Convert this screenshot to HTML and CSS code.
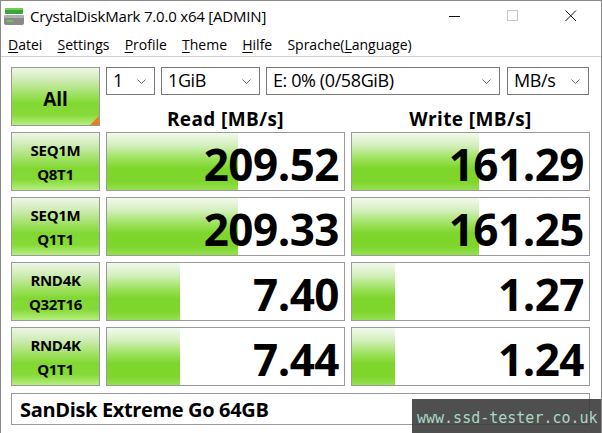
FILE: index.html
```html
<!DOCTYPE html>
<html lang="de">
<head>
<meta charset="utf-8">
<title>CrystalDiskMark 7.0.0 x64 [ADMIN]</title>
<link rel="stylesheet" href="styles.css">
</head>
<body>
<div class="window">
  <div class="titlebar">
    <svg class="app-icon" width="20" height="18" viewBox="0 0 20 18">
      <rect x="1" y="0" width="18" height="6" fill="#3aa83a"/>
      <rect x="1" y="0" width="18" height="2" fill="#6ccf5a"/>
      <rect x="0" y="7" width="20" height="10" rx="2" fill="#8a8a8a"/>
      <rect x="0" y="7" width="20" height="3" rx="1" fill="#b0b0b0"/>
      <rect x="3" y="12" width="6" height="2" fill="#5fd04a"/>
    </svg>
    <span class="title">CrystalDiskMark 7.0.0 x64 [ADMIN]</span>
    <div class="controls">
      <svg class="ctl" width="12" height="12" viewBox="0 0 12 12"><line x1="0" y1="6.5" x2="11" y2="6.5" stroke="#111" stroke-width="1"/></svg>
      <svg class="ctl" width="12" height="12" viewBox="0 0 12 12"><rect x="0.5" y="0.5" width="10" height="10" fill="none" stroke="#c8c8c8" stroke-width="1"/></svg>
      <svg class="ctl" width="12" height="12" viewBox="0 0 12 12"><path d="M0.5 0.5 L11 11 M11 0.5 L0.5 11" stroke="#111" stroke-width="1"/></svg>
    </div>
  </div>
  <div class="menubar">
    <span class="menu"><u>D</u>atei</span>
    <span class="menu"><u>S</u>ettings</span>
    <span class="menu"><u>P</u>rofile</span>
    <span class="menu"><u>T</u>heme</span>
    <span class="menu"><u>H</u>ilfe</span>
    <span class="menu">Sprache(<u>L</u>anguage)</span>
  </div>
  <div class="content">
    <div class="grid">
      <div class="all">All<span class="corner"></span></div>
      <div class="top-right">
        <div class="selects">
          <div class="select s-count"><span>1</span><svg class="chev" width="9" height="5" viewBox="0 0 9 5"><path d="M0.5 0.5 L4.5 4.5 L8.5 0.5" fill="none" stroke="#666" stroke-width="1"/></svg></div>
          <div class="select s-size"><span>1GiB</span><svg class="chev" width="9" height="5" viewBox="0 0 9 5"><path d="M0.5 0.5 L4.5 4.5 L8.5 0.5" fill="none" stroke="#666" stroke-width="1"/></svg></div>
          <div class="select s-drive"><span>E: 0% (0/58GiB)</span><svg class="chev" width="9" height="5" viewBox="0 0 9 5"><path d="M0.5 0.5 L4.5 4.5 L8.5 0.5" fill="none" stroke="#666" stroke-width="1"/></svg></div>
          <div class="select s-unit"><span>MB/s</span><svg class="chev" width="9" height="5" viewBox="0 0 9 5"><path d="M0.5 0.5 L4.5 4.5 L8.5 0.5" fill="none" stroke="#666" stroke-width="1"/></svg></div>
        </div>
        <div class="headers">
          <div class="head">Read [MB/s]</div>
          <div class="head">Write [MB/s]</div>
        </div>
      </div>

      <div class="label"><span>SEQ1M</span><span>Q8T1</span></div>
      <div class="value"><div class="bar" style="width:55.3%"></div><span class="num">209.52</span></div>
      <div class="value"><div class="bar" style="width:53.6%"></div><span class="num">161.29</span></div>

      <div class="label"><span>SEQ1M</span><span>Q1T1</span></div>
      <div class="value"><div class="bar" style="width:55.3%"></div><span class="num">209.33</span></div>
      <div class="value"><div class="bar" style="width:53.6%"></div><span class="num">161.25</span></div>

      <div class="label"><span>RND4K</span><span>Q32T16</span></div>
      <div class="value"><div class="bar" style="width:30.8%"></div><span class="num">7.40</span></div>
      <div class="value"><div class="bar" style="width:18.1%"></div><span class="num">1.27</span></div>

      <div class="label"><span>RND4K</span><span>Q1T1</span></div>
      <div class="value"><div class="bar" style="width:30.8%"></div><span class="num">7.44</span></div>
      <div class="value"><div class="bar" style="width:18.1%"></div><span class="num">1.24</span></div>
    </div>
    <div class="footer">SanDisk Extreme Go 64GB</div>
  </div>
  <div class="watermark">www.ssd-tester.co.uk</div>
</div>
</body>
</html>
```
FILE: styles.css
```css
* { box-sizing: border-box; }
html, body { margin: 0; padding: 0; background: #fff; }
body { font-family: "Open Sans", "Noto Sans", sans-serif; color: #000; }

.window {
  position: relative;
  width: 602px;
  height: 433px;
  border: 1px solid #8a8a8a;
  border-bottom: none;
  background: #fff;
  overflow: hidden;
}

.titlebar {
  height: 30px;
  display: flex;
  align-items: center;
  padding-left: 3px;
}
.app-icon { margin-top: 1px; }
.title {
  margin-left: 6px;
  font-size: 15px;
  color: #000;
  letter-spacing: -0.2px;
}
.controls {
  margin-left: auto;
  display: flex;
  align-items: center;
  gap: 46px;
  padding-right: 24px;
}
.ctl { display: block; }

.menubar {
  height: 26px;
  display: flex;
  align-items: center;
  padding-left: 7px;
  padding-top: 1px;
  font-size: 14px;
  border-bottom: 1px solid #d0d0d0;
}
.menu { margin-right: 15.2px; }
.menu u { text-decoration-thickness: 1px; text-underline-offset: 2px; }

.content {
  padding: 10px 10px 0 10px;
}

.grid {
  display: grid;
  grid-template-columns: 89px 239px 239px;
  grid-auto-rows: 59px;
  column-gap: 6px;
  row-gap: 6px;
}

.all, .label {
  border: 1px solid #9a9a9a;
  background: linear-gradient(to bottom, #eef7e6 0%, #cdebb2 22%, #9be05c 48%, #82d832 62%, #86da38 82%, #b6ee80 100%);
  display: flex;
  font-weight: 700;
}
.all {
  position: relative;
  align-items: center;
  justify-content: center;
  font-size: 19px;
  padding-top: 4px;
}
.corner {
  position: absolute;
  right: 0;
  bottom: 0;
  width: 0;
  height: 0;
  border-style: solid;
  border-width: 0 0 9px 9px;
  border-color: transparent transparent #f07a20 transparent;
}

.top-right {
  grid-column: span 2;
  display: flex;
  flex-direction: column;
}
.selects {
  display: flex;
  height: 30px;
}
.select {
  border: 1px solid #7a7a7a;
  display: flex;
  align-items: center;
  justify-content: space-between;
  padding: 0 8px 2px 6px;
  font-size: 18px;
  letter-spacing: -0.4px;
  background: #fff;
}
.chev { margin-top: 2px; }
.s-count { width: 49px; margin-right: 6px; }
.s-size { width: 99px; margin-right: 6px; }
.s-drive { width: 234px; margin-right: 7px; }
.s-unit { width: 82px; }

.headers {
  display: grid;
  grid-template-columns: 239px 239px;
  column-gap: 6px;
  flex: 1;
}
.head {
  font-weight: 700;
  font-size: 19px;
  text-align: center;
  line-height: 1;
  padding-top: 15px;
  letter-spacing: 0.4px;
}

.label {
  flex-direction: column;
  align-items: center;
  justify-content: center;
  font-size: 15px;
  line-height: 24px;
  letter-spacing: -0.3px;
  padding-top: 1px;
}

.value {
  position: relative;
  border: 1px solid #9a9a9a;
  background: #fff;
  display: flex;
  align-items: center;
  justify-content: flex-end;
  padding-right: 5px;
}
.bar {
  position: absolute;
  left: 0;
  top: 0;
  bottom: 0;
  background: linear-gradient(to bottom, #f3faee 0%, #d3efbc 22%, #9de25e 45%, #7ed62c 62%, #7ed62c 85%, #95e050 100%);
}
.num {
  position: relative;
  font-weight: 700;
  font-size: 44px;
  line-height: 1;
  letter-spacing: -0.5px;
  padding-top: 5px;
}

.footer {
  margin-top: 7px;
  height: 32px;
  width: 579px;
  border: 1px solid #9a9a9a;
  display: flex;
  align-items: center;
  padding-left: 8px;
  font-weight: 700;
  font-size: 20px;
  letter-spacing: -0.35px;
}

.watermark {
  position: absolute;
  left: 411px;
  top: 398px;
  width: 191px;
  height: 35px;
  background: rgba(60, 60, 60, 0.9);
  color: #a9d9c6;
  font-family: "DejaVu Sans Mono", "Liberation Mono", monospace;
  font-size: 15px;
  display: flex;
  align-items: center;
  padding-left: 5px;
  padding-top: 2px;
}
```
